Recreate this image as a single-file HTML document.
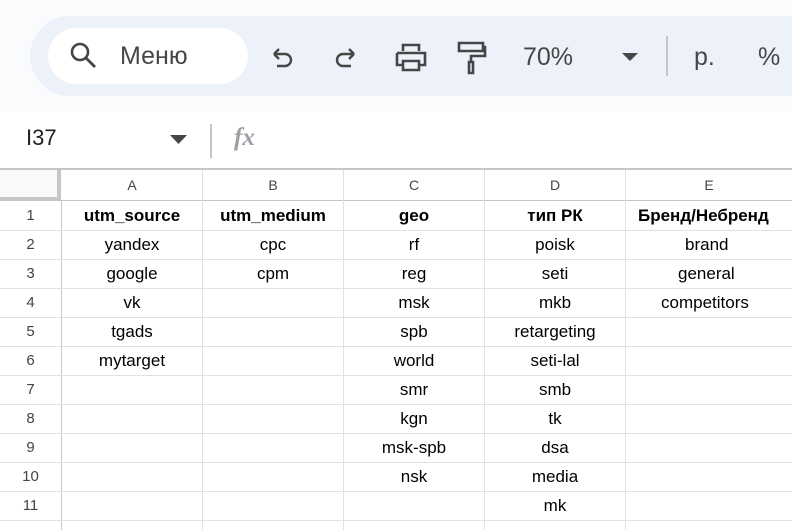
<!DOCTYPE html>
<html><head><meta charset="utf-8"><style>
*{margin:0;padding:0;box-sizing:border-box}
html,body{width:792px;height:530px;overflow:hidden}
body{background:#fff;font-family:"Liberation Sans",Arial,sans-serif;position:relative}
.top{position:absolute;left:0;top:0;width:792px;height:112px;background:#f9fbfd}
.bar{position:absolute;left:30px;top:16px;width:762px;height:80px;background:#edf2fa;border-radius:40px 0 0 40px}
.pill{position:absolute;left:48px;top:28px;width:200px;height:56px;background:#fff;border-radius:28px}
.t{position:absolute;color:#444746;font-size:25px;white-space:nowrap}
.v{position:absolute;top:170px;width:1px;height:360px;background:#e1e1e1}
.h{position:absolute;left:0;width:792px;height:1px;background:#e1e1e1}
.c{position:absolute;height:29px;line-height:29px;text-align:center;font-size:17px;color:#000;white-space:nowrap}
.n{position:absolute;left:0;width:61px;height:29px;line-height:29px;text-align:center;font-size:15px;color:#444}
.ch{position:absolute;top:170px;height:31px;line-height:31px;text-align:center;font-size:14px;color:#444}
b{font-weight:bold}
</style></head><body>
<div class="top"></div>
<div class="bar"></div>
<div class="pill"></div>
<svg style="position:absolute;left:68px;top:40px" width="32" height="32" viewBox="0 0 32 32"><circle cx="12" cy="12" r="8" fill="none" stroke="#444746" stroke-width="2.6"/><path d="M18 18l9 9" stroke="#444746" stroke-width="2.8"/></svg>
<div class="t" style="left:120px;top:42px">Меню</div>
<svg style="position:absolute;left:268px;top:46px" width="28" height="28" viewBox="0 0 28 28"><path d="M6 8h11a6 6 0 0 1 0 12H9M6 8l5-5M6 8l5 5" fill="none" stroke="#444746" stroke-width="2.4"/></svg>
<svg style="position:absolute;left:332px;top:46px" width="28" height="28" viewBox="0 0 28 28"><path d="M22 8H11a6 6 0 0 0 0 12h8M22 8l-5-5M22 8l-5 5" fill="none" stroke="#444746" stroke-width="2.4"/></svg>
<svg style="position:absolute;left:394px;top:42px" width="34" height="32" viewBox="0 0 34 32"><path d="M9 9V3h16v6M3 11h28v12h-5M8 23H3V11M9 19h16v9H9z" fill="none" stroke="#444746" stroke-width="2.6"/></svg>
<svg style="position:absolute;left:456px;top:40px" width="32" height="38" viewBox="0 0 32 38"><path d="M3 3h24v8H3zM27 7h2v9H15v6M13 22h4v11h-4z" fill="none" stroke="#444746" stroke-width="2.6"/></svg>
<div class="t" style="left:523px;top:43px">70%</div>
<svg style="position:absolute;left:622px;top:53px" width="16" height="10"><path d="M0 0h16L8 8z" fill="#444746"/></svg>
<div style="position:absolute;left:666px;top:36px;width:2px;height:40px;background:#c4c7c5"></div>
<div class="t" style="left:694px;top:43px">р.</div>
<div class="t" style="left:758px;top:43px">%</div>
<div style="position:absolute;left:26px;top:125px;font-size:22px;color:#1f1f1f">I37</div>
<svg style="position:absolute;left:170px;top:135px" width="18" height="10"><path d="M0 0h17L8.5 9z" fill="#444746"/></svg>
<div style="position:absolute;left:210px;top:124px;width:2px;height:34px;background:#c4c7c5"></div>
<div style="position:absolute;left:234px;top:124px;font-size:25px;color:#9aa0a6;font-family:'Liberation Serif',serif;font-style:italic;font-weight:bold">fx</div>

<div style="position:absolute;left:0;top:168px;width:792px;height:2px;background:#c4c7c5"></div>
<div style="position:absolute;left:0;top:170px;width:57px;height:27px;background:#f8f9fa"></div>
<div style="position:absolute;left:0;top:197px;width:61px;height:4px;background:#c4c7c5"></div>
<div style="position:absolute;left:57px;top:170px;width:4px;height:31px;background:#c4c7c5"></div>
<div style="position:absolute;left:61px;top:200px;width:731px;height:1px;background:#c4c7c5"></div>
<div style="position:absolute;left:61px;top:201px;width:1px;height:329px;background:#c4c7c5"></div>
<div class="v" style="left:202px"></div><div class="v" style="left:343px"></div><div class="v" style="left:484px"></div><div class="v" style="left:625px"></div>
<div class="h" style="top:230px"></div><div class="h" style="top:259px"></div><div class="h" style="top:288px"></div><div class="h" style="top:317px"></div><div class="h" style="top:346px"></div><div class="h" style="top:375px"></div><div class="h" style="top:404px"></div><div class="h" style="top:433px"></div><div class="h" style="top:462px"></div><div class="h" style="top:491px"></div><div class="h" style="top:520px"></div>

<div class="ch" style="left:62px;width:140px">A</div><div class="ch" style="left:203px;width:140px">B</div><div class="ch" style="left:344px;width:140px">C</div><div class="ch" style="left:485px;width:140px">D</div><div class="ch" style="left:626px;width:166px">E</div>

<div class="n" style="top:201px">1</div><div class="n" style="top:230px">2</div><div class="n" style="top:259px">3</div><div class="n" style="top:288px">4</div><div class="n" style="top:317px">5</div><div class="n" style="top:346px">6</div><div class="n" style="top:375px">7</div><div class="n" style="top:404px">8</div><div class="n" style="top:433px">9</div><div class="n" style="top:462px">10</div><div class="n" style="top:491px">11</div>

<div class="c" style="left:62px;width:140px;top:201px"><b>utm_source</b></div>
<div class="c" style="left:203px;width:140px;top:201px"><b>utm_medium</b></div>
<div class="c" style="left:344px;width:140px;top:201px"><b>geo</b></div>
<div class="c" style="left:485px;width:140px;top:201px"><b>тип РК</b></div>
<div class="c" style="left:626px;width:166px;top:201px;text-align:left;padding-left:12px"><b>Бренд/Небренд</b></div>

<div class="c" style="left:62px;width:140px;top:230px">yandex</div>
<div class="c" style="left:62px;width:140px;top:259px">google</div>
<div class="c" style="left:62px;width:140px;top:288px">vk</div>
<div class="c" style="left:62px;width:140px;top:317px">tgads</div>
<div class="c" style="left:62px;width:140px;top:346px">mytarget</div>

<div class="c" style="left:203px;width:140px;top:230px">cpc</div>
<div class="c" style="left:203px;width:140px;top:259px">cpm</div>

<div class="c" style="left:344px;width:140px;top:230px">rf</div>
<div class="c" style="left:344px;width:140px;top:259px">reg</div>
<div class="c" style="left:344px;width:140px;top:288px">msk</div>
<div class="c" style="left:344px;width:140px;top:317px">spb</div>
<div class="c" style="left:344px;width:140px;top:346px">world</div>
<div class="c" style="left:344px;width:140px;top:375px">smr</div>
<div class="c" style="left:344px;width:140px;top:404px">kgn</div>
<div class="c" style="left:344px;width:140px;top:433px">msk-spb</div>
<div class="c" style="left:344px;width:140px;top:462px">nsk</div>

<div class="c" style="left:485px;width:140px;top:230px">poisk</div>
<div class="c" style="left:485px;width:140px;top:259px">seti</div>
<div class="c" style="left:485px;width:140px;top:288px">mkb</div>
<div class="c" style="left:485px;width:140px;top:317px">retargeting</div>
<div class="c" style="left:485px;width:140px;top:346px">seti-lal</div>
<div class="c" style="left:485px;width:140px;top:375px">smb</div>
<div class="c" style="left:485px;width:140px;top:404px">tk</div>
<div class="c" style="left:485px;width:140px;top:433px">dsa</div>
<div class="c" style="left:485px;width:140px;top:462px">media</div>
<div class="c" style="left:485px;width:140px;top:491px">mk</div>

<div class="c" style="left:626px;width:166px;top:230px;text-align:left;padding-left:59px">brand</div>
<div class="c" style="left:626px;width:166px;top:259px;text-align:left;padding-left:52px">general</div>
<div class="c" style="left:626px;width:166px;top:288px;text-align:left;padding-left:35px">competitors</div>
</body></html>
